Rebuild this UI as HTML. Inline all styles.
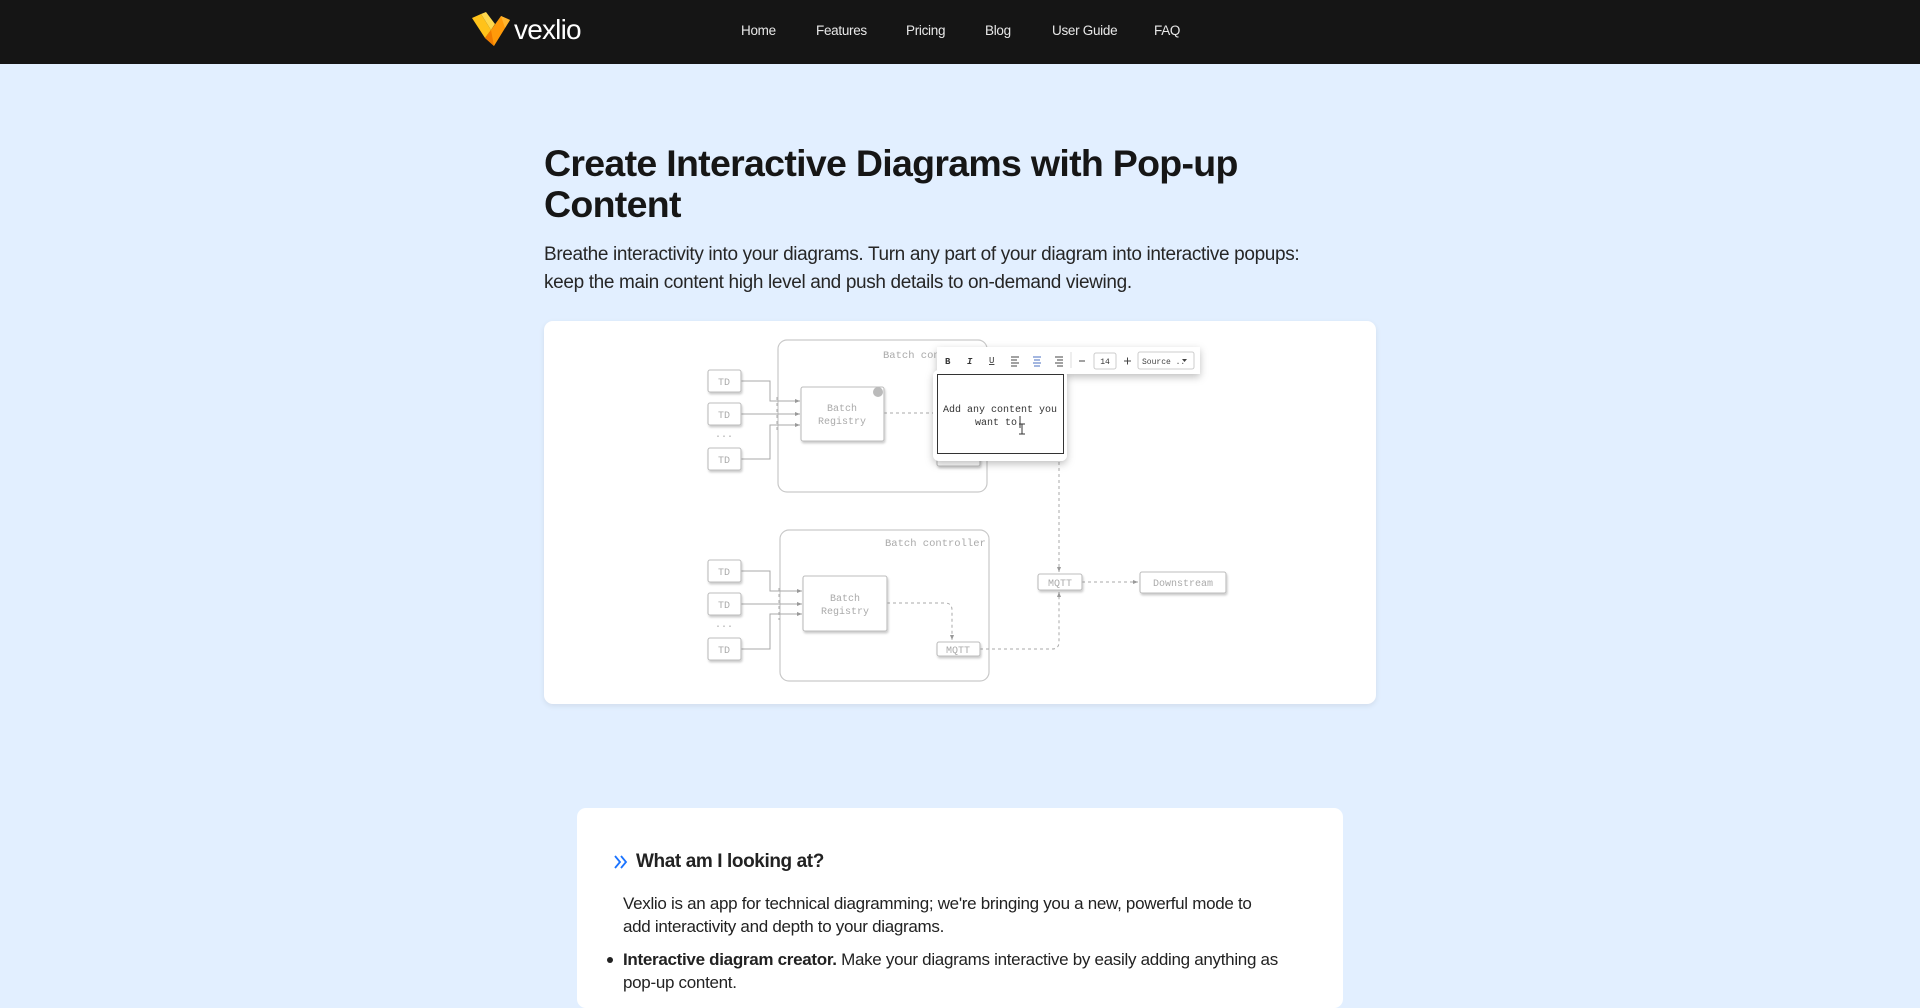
<!DOCTYPE html>
<html><head><meta charset="utf-8"><style>
*{margin:0;padding:0;box-sizing:border-box}
body{width:1920px;height:993px;overflow:hidden;background:#e2efff;font-family:"Liberation Sans",sans-serif;position:relative;color:#161616}
.nav{position:absolute;left:0;top:0;width:1920px;height:64px;background:#151515}
.nav a{position:absolute;top:23px;color:#e8e8e8;font-size:13.5px;text-decoration:none;letter-spacing:-0.3px}
.logo-t{position:absolute;left:514px;top:14px;color:#fff;font-size:28px;letter-spacing:-0.8px}
h1{position:absolute;left:544px;top:143px;font-size:37.5px;line-height:41px;font-weight:bold;letter-spacing:-0.7px;width:820px;color:#161616}
.lead{position:absolute;left:544px;top:241px;font-size:19px;line-height:28px;width:800px;color:#262626;letter-spacing:-0.35px}
.card{position:absolute;left:544px;top:321px;width:832px;height:383px;background:#fff;border-radius:9px;box-shadow:0 2px 6px rgba(0,0,0,.08)}
.card2{position:absolute;left:577px;top:808px;width:766px;height:200px;background:#fff;border-radius:9px}
.h2{position:absolute;left:636px;top:851px;font-size:19px;font-weight:bold;color:#222;letter-spacing:-0.4px}
.p{position:absolute;left:623px;font-size:17px;line-height:23px;color:#222;width:650px;letter-spacing:-0.3px}
.dot{position:absolute;left:607px;top:957px;width:6px;height:6px;border-radius:50%;background:#222}
svg text{font-family:"Liberation Mono",monospace}
</style></head><body>
<div class="nav">
<svg style="position:absolute;left:472px;top:12px" width="38" height="34" viewBox="0 0 38 34">
<path d="M0 6 L9 2 L19 18 L13 26 Z" fill="#ffc21a"/>
<path d="M9 2 L19 18 L23 12 L14 0 Z" fill="#ffd84d"/>
<path d="M19 18 L29 4 L38 8 L22 34 L13 26 Z" fill="#ff9a0a"/>
<path d="M29 4 L38 8 L33 16 Z" fill="#ffb52e"/>
<path d="M13 26 L22 34 L19 18 Z" fill="#f07c00"/>
</svg>
<div class="logo-t">vexlio</div>
<a style="left:741px">Home</a><a style="left:816px">Features</a><a style="left:906px">Pricing</a><a style="left:985px">Blog</a><a style="left:1052px">User Guide</a><a style="left:1154px">FAQ</a>
</div>
<h1>Create Interactive Diagrams with Pop-up Content</h1>
<div class="lead">Breathe interactivity into your diagrams. Turn any part of your diagram into interactive popups: keep the main content high level and push details to on-demand viewing.</div>
<div class="card"></div>
<svg style="position:absolute;left:0;top:0" width="1920" height="993">
<defs><marker id="a" markerWidth="6" markerHeight="6" refX="5" refY="3" orient="auto"><path d="M0 1 L5 3 L0 5Z" fill="#999"/></marker>
<filter id="s" x="-20%" y="-20%" width="140%" height="150%"><feDropShadow dx="1" dy="2" stdDeviation="1" flood-opacity=".2"/></filter>
<filter id="s2" x="-20%" y="-20%" width="140%" height="150%"><feDropShadow dx="0" dy="3" stdDeviation="4" flood-opacity=".25"/></filter></defs>
<g fill="none" stroke="#c9c9c9" stroke-width="1.2">
<rect x="778" y="340" width="209" height="152" rx="9"/>
<rect x="780" y="530" width="209" height="151" rx="9"/>
</g>
<g font-size="10.5" fill="#aaa">
<text x="883" y="358">Batch con</text>
<text x="885" y="546">Batch controller</text>
</g>
<g stroke="#a9a9a9" stroke-width="1" fill="none">
<path d="M741 381 H770 V401 H800" marker-end="url(#a)"/><path d="M741 414 H800" marker-end="url(#a)"/><path d="M741 459 H770 V425 H800" marker-end="url(#a)"/>
<path d="M741 571 H770 V591 H802" marker-end="url(#a)"/><path d="M741 604 H802" marker-end="url(#a)"/><path d="M741 649 H770 V614 H802" marker-end="url(#a)"/>
<path d="M777 397 V432 M779 588 V620" stroke-dasharray="3 3"/>
<path d="M884 413 H937" stroke-dasharray="3 3"/>
<path d="M887 603 H945 Q952 603 952 610 V640" stroke-dasharray="3 3" marker-end="url(#a)"/>
<path d="M980 649 H1052 Q1059 649 1059 642 V592" stroke-dasharray="3 3" marker-end="url(#a)"/>
<path d="M1059 462 V572" stroke-dasharray="3 3" marker-end="url(#a)"/>
<path d="M1082 582 H1138" stroke-dasharray="3 3" marker-end="url(#a)"/>
</g>
<g fill="#fff" stroke="#bdbdbd" stroke-width="1.1" filter="url(#s)">
<rect x="708" y="370" width="33" height="22" rx="2"/><rect x="708" y="403" width="33" height="22" rx="2"/><rect x="708" y="448" width="33" height="22" rx="2"/>
<rect x="708" y="560" width="33" height="22" rx="2"/><rect x="708" y="593" width="33" height="22" rx="2"/><rect x="708" y="638" width="33" height="22" rx="2"/>
<rect x="801" y="387" width="83" height="54" rx="2"/><rect x="803" y="576" width="84" height="55" rx="2"/>
<rect x="937" y="642" width="43" height="14" rx="2"/><rect x="1038" y="574" width="44" height="16" rx="2"/><rect x="1140" y="572" width="86" height="21" rx="2"/>
<rect x="937" y="452" width="43" height="14" rx="2"/>
</g>
<circle cx="878" cy="392" r="5" fill="#bbb"/>
<g font-size="10" fill="#aaa" text-anchor="middle">
<text x="724" y="385">TD</text><text x="724" y="418">TD</text><text x="724" y="437">...</text><text x="724" y="463">TD</text>
<text x="724" y="575">TD</text><text x="724" y="608">TD</text><text x="724" y="627">...</text><text x="724" y="653">TD</text>
<text x="842" y="411">Batch</text><text x="842" y="424">Registry</text>
<text x="845" y="601">Batch</text><text x="845" y="614">Registry</text>
<text x="958" y="653">MQTT</text><text x="1060" y="586">MQTT</text><text x="1183" y="586">Downstream</text>
</g>
<g filter="url(#s2)"><rect x="933" y="370" width="134" height="91" rx="6" fill="#fff"/><rect x="937" y="347" width="263" height="27" fill="#fff"/></g>
<rect x="937.5" y="374.5" width="126" height="79" fill="#fff" stroke="#333" stroke-width="1"/>
<g font-size="10" fill="#333" text-anchor="middle"><text x="1000" y="412">Add any content you</text><text x="996" y="425">want to</text></g>
<path d="M1020 416 V428 M1022 424 V434 M1019 424 H1025 M1019 434 H1025" stroke="#333" stroke-width="1"/>
<g font-size="9" fill="#333">
<text x="945" y="364" font-weight="bold" font-family="Liberation Sans">B</text>
<text x="967" y="364" font-style="italic" font-weight="bold" font-family="Liberation Serif">I</text>
<text x="989" y="363" font-family="Liberation Sans" text-decoration="underline">U</text>
</g>
<g stroke="#444" stroke-width="1"><path d="M1011 357h8M1011 360h6M1011 363h8M1011 366h6"/><path d="M1033 357h8M1034 360h6M1033 363h8M1034 366h6" stroke="#4a6fc0"/><path d="M1055 357h8M1057 360h6M1055 363h8M1057 366h6"/><path d="M1071 352v16" stroke="#ddd"/><path d="M1079 361h6M1124 361h7M1127.5 357.5v7"/></g>
<rect x="1094" y="353" width="22" height="16" rx="2" fill="#fff" stroke="#ccc"/>
<text x="1105" y="364" font-size="8" fill="#333" text-anchor="middle" font-family="Liberation Sans">14</text>
<rect x="1138" y="352" width="56" height="17" rx="2" fill="#fff" stroke="#ccc"/>
<text x="1142" y="364" font-size="8" fill="#444" font-family="Liberation Sans">Source ..</text>
<path d="M1182 359h5l-2.5 3z" fill="#444"/>
</svg>
<div class="card2"></div>
<svg style="position:absolute;left:613px;top:854px" width="16" height="16" viewBox="0 0 16 16"><path d="M2 2 L7 8 L2 14 M8 2 L13 8 L8 14" stroke="#1a73ff" stroke-width="1.8" fill="none"/></svg>
<div class="h2">What am I looking at?</div>
<div class="p" style="top:892px">Vexlio is an app for technical diagramming; we're bringing you a new, powerful mode to add interactivity and depth to your diagrams.</div>
<div class="dot"></div>
<div class="p" style="top:948px;width:690px"><b>Interactive diagram creator.</b> Make your diagrams interactive by easily adding anything as pop-up content.</div>
</body></html>
